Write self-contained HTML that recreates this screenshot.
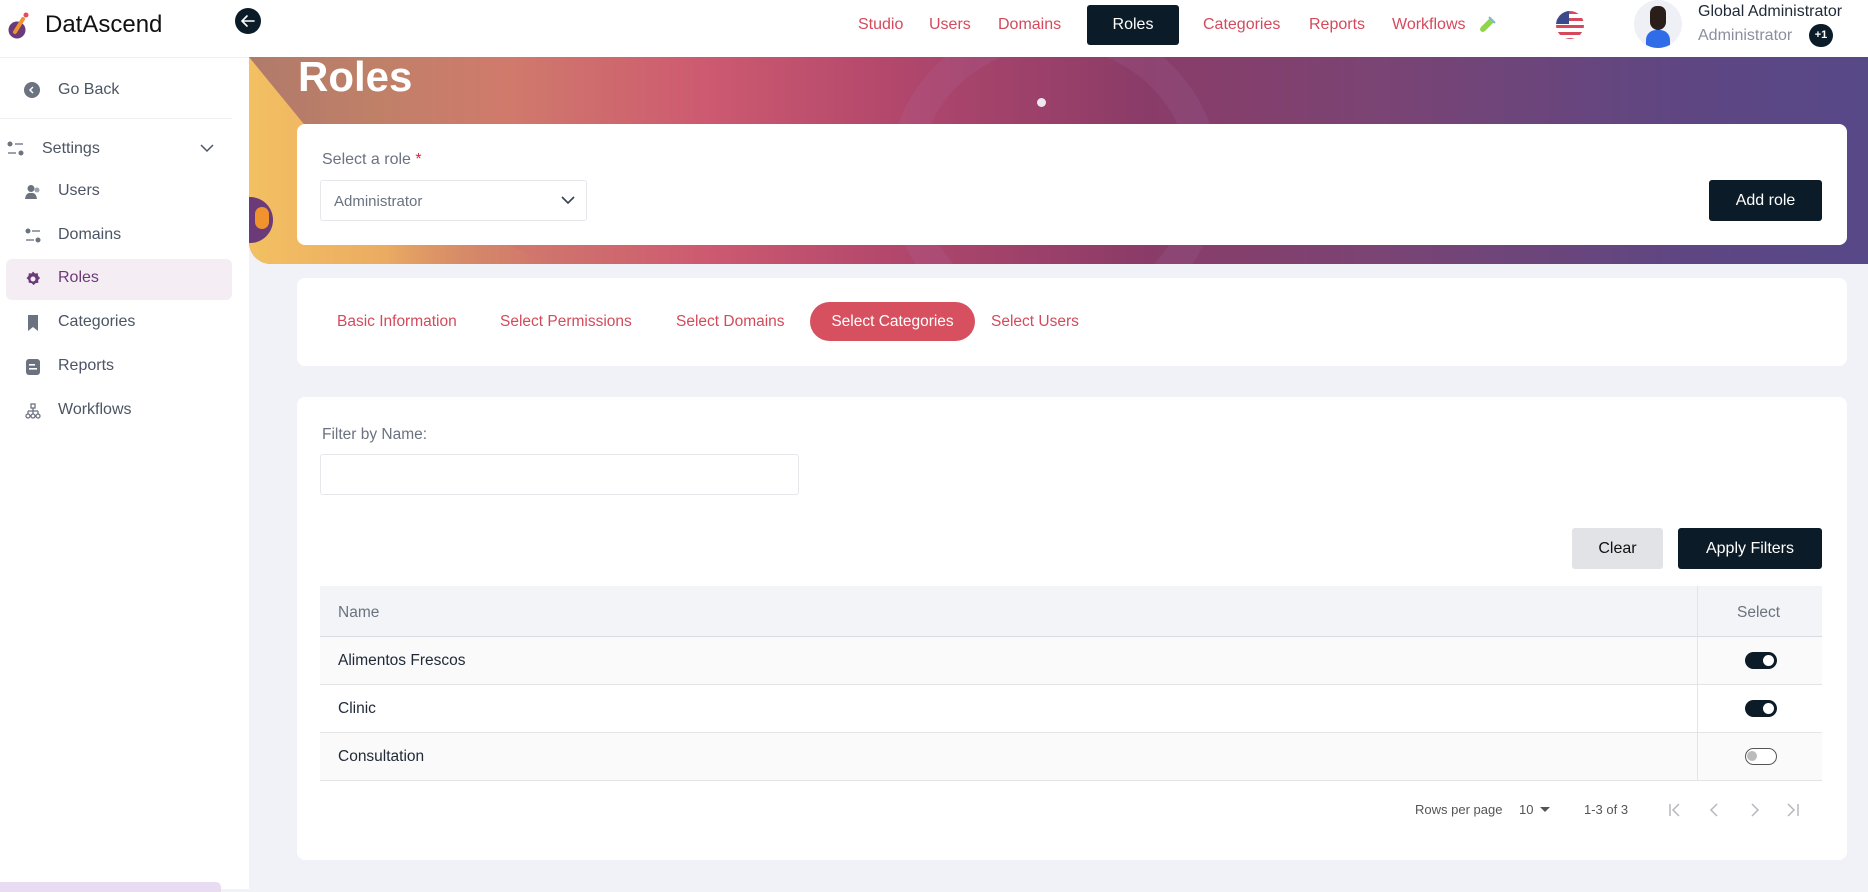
<!DOCTYPE html>
<html><head><meta charset="utf-8"><style>
*{box-sizing:border-box;margin:0;padding:0}
body{width:1868px;height:889px;overflow:hidden;background:#f1f2f7;font-family:"Liberation Sans",sans-serif;position:relative;color:#111827}
.abs{position:absolute}
.header{left:0;top:0;width:1868px;height:57px;background:#fff}
.nav a{position:absolute;top:16px;font-size:16px;color:#d44a5c;text-decoration:none}
.side{left:0;top:57px;width:249px;height:832px;background:#fff;border-top:1px solid #eee}
.si{position:absolute;left:58px;font-size:16px;color:#4b5563}
.ic{position:absolute;left:25px;width:16px;height:16px}
.card{background:#fff;border-radius:8px;position:absolute}
.tab{position:absolute;top:313px;font-size:15.5px;color:#d44a5c}
.tog{position:absolute;left:1745px;width:32px;height:17px;border-radius:9px;background:#0b1b27}
.tog::after{content:"";position:absolute;right:3px;top:3px;width:11px;height:11px;border-radius:50%;background:#fff}
.row{position:absolute;left:320px;width:1502px;height:48px;border-bottom:1px solid #e2e4e8;font-size:15.5px;color:#1f2937;padding:15px 0 0 18px}
</style></head><body>
<div class="abs header"></div>
<svg class="abs" style="left:6px;top:10px" width="26" height="30" viewBox="0 0 26 30"><circle cx="11" cy="20" r="8.5" fill="#6b3a78"/><path d="M9 22 L17 9" stroke="#f0922e" stroke-width="4" stroke-linecap="round"/><circle cx="20" cy="5" r="2.5" fill="#e84a5f"/></svg>
<div class="abs" style="left:45px;top:11px;font-size:24px;color:#111">DatAscend</div>
<div class="abs" style="left:235px;top:8px;width:26px;height:26px;border-radius:50%;background:#0b1b27"><svg width="26" height="26" fill="none" stroke="#fff" stroke-width="1.6" stroke-linecap="round"><path d="M19 13H7M12 8l-5 5 5 5"/></svg></div>
<div class="nav">
<a style="left:858px">Studio</a><a style="left:929px">Users</a><a style="left:998px">Domains</a>
<div class="abs" style="left:1087px;top:5px;width:92px;height:40px;background:#0b1b27;border-radius:3px;color:#fff;font-size:16px;text-align:center;line-height:40px">Roles</div>
<a style="left:1203px">Categories</a><a style="left:1309px">Reports</a><a style="left:1392px">Workflows</a>
</div>
<svg class="abs" style="left:1478px;top:16px" width="18" height="18" viewBox="0 0 18 18"><path d="M12 2 L16 6 L7 15 Q4 17 3 15 Q1 14 3 11 Z" fill="#8fd44a"/><path d="M11 1 L17 7" stroke="#7ab8e0" stroke-width="2"/></svg>
<svg class="abs" style="left:1555px;top:10px" width="30" height="30" viewBox="0 0 30 30"><defs><clipPath id="c"><circle cx="15" cy="15" r="14"/></clipPath></defs><g clip-path="url(#c)"><rect width="30" height="30" fill="#fff"/><rect y="1" width="30" height="3" fill="#d44a5c"/><rect y="8" width="30" height="3" fill="#d44a5c"/><rect y="15" width="30" height="3" fill="#d44a5c"/><rect y="22" width="30" height="3" fill="#d44a5c"/><rect y="28" width="30" height="3" fill="#d44a5c"/><rect width="14" height="14" fill="#3b4a8a"/></g></svg>
<div class="abs" style="left:1634px;top:0px;width:48px;height:48px;border-radius:50%;background:#eef0f6;overflow:hidden">
<div class="abs" style="left:12px;top:30px;width:24px;height:20px;border-radius:10px 10px 0 0;background:#2f6de8"></div>
<div class="abs" style="left:16px;top:6px;width:16px;height:24px;border-radius:7px 7px 8px 8px;background:#2a1e1a"></div>
</div>
<div class="abs" style="left:1698px;top:3px;font-size:16px;color:#1f2937">Global Administrator</div>
<div class="abs" style="left:1698px;top:27px;font-size:16px;color:#8a8fa0">Administrator</div>
<div class="abs" style="left:1809px;top:24px;width:24px;height:23px;border-radius:12px;background:#0b1b27;color:#fff;font-size:11px;font-weight:bold;text-align:center;line-height:23px">+1</div>

<div class="abs side">
<div class="abs" style="left:24px;top:24px;width:16px;height:16px;border-radius:50%;background:#6b7280"><svg width="16" height="16" fill="none" stroke="#fff" stroke-width="1.5"><path d="M9 5l-3 3 3 3"/></svg></div>
<div class="si" style="top:23px">Go Back</div>
<div class="abs" style="left:0;top:60px;width:232px;height:1px;background:#eee"></div>
<svg class="abs" style="left:7px;top:83px" width="18" height="16"><circle cx="3" cy="3" r="2.5" fill="#6b7280"/><rect x="8" y="2" width="8" height="2" fill="#9ca3af"/><rect x="1" y="11" width="8" height="2" fill="#9ca3af"/><circle cx="14" cy="12" r="2.5" fill="#6b7280"/></svg>
<div class="si" style="left:42px;top:82px">Settings</div>
<svg class="abs" style="left:199px;top:84px" width="16" height="12" fill="none" stroke="#4b5563" stroke-width="1.5"><path d="M2 3l6 6 6-6"/></svg>
<svg class="ic" style="top:126px" viewBox="0 0 16 16"><circle cx="6" cy="4.5" r="3.5" fill="#6b7280"/><path d="M0 15 Q1 8 6 9 Q11 8 12 15 Z" fill="#6b7280"/><circle cx="12" cy="6" r="2.5" fill="#9ca3af"/></svg>
<div class="si" style="top:124px">Users</div>
<svg class="ic" style="top:170px" viewBox="0 0 16 16"><circle cx="3" cy="3" r="2.5" fill="#6b7280"/><rect x="7" y="2" width="8" height="2" fill="#9ca3af"/><rect x="1" y="11" width="8" height="2" fill="#9ca3af"/><circle cx="13" cy="12" r="2.5" fill="#6b7280"/></svg>
<div class="si" style="top:168px">Domains</div>
<div class="abs" style="left:6px;top:201px;width:226px;height:41px;border-radius:6px;background:#f4eef4"></div>
<svg class="ic" style="top:213px" viewBox="0 0 16 16"><path d="M8 0.5l2 2 2.8-.3.3 2.8 2 2-2 2 .3 2.8-2.8.3-2 2-2-2-2.8-.3-.3-2.8-2-2 2-2 .3-2.8 2.8.3z" fill="#6b3a78"/><circle cx="8" cy="8" r="2.5" fill="#f4eef4"/></svg>
<div class="si" style="top:211px;color:#6b3a78">Roles</div>
<svg class="ic" style="top:257px" viewBox="0 0 16 16"><path d="M3 0h10v16l-5-4-5 4z" fill="#6b7280"/></svg>
<div class="si" style="top:255px">Categories</div>
<svg class="ic" style="top:301px" viewBox="0 0 16 16"><rect x="1" y="0" width="14" height="16" rx="3" fill="#6b7280"/><rect x="4" y="5" width="6" height="1.6" fill="#fff"/><rect x="4" y="9" width="8" height="1.6" fill="#fff"/></svg>
<div class="si" style="top:299px">Reports</div>
<svg class="ic" style="top:345px" viewBox="0 0 16 16" fill="none" stroke="#6b7280" stroke-width="1.3"><rect x="6" y="1" width="4" height="4"/><path d="M8 5v3M3 8h10M3 8v3M8 8v3M13 8v3"/><circle cx="3" cy="13" r="2"/><circle cx="8" cy="13" r="2"/><circle cx="13" cy="13" r="2"/></svg>
<div class="si" style="top:343px">Workflows</div>
<div class="abs" style="left:0;top:824px;width:221px;height:10px;background:#e8dcf2;border-radius:0 5px 0 0"></div>
</div>

<div class="abs" style="left:249px;top:57px;width:1619px;height:207px;border-radius:0 0 0 22px;overflow:hidden;background:linear-gradient(90deg,#b07a6a 0%,#c08068 8%,#d07a6c 16%,#cd5a70 28%,#b2476c 40%,#8b3c68 55%,#7a4474 70%,#5f4682 88%,#574888 100%)">
<svg class="abs" style="left:0;top:0" width="300" height="207"><defs><linearGradient id="y" x1="0" x2="1" y1="0" y2="0"><stop offset="0" stop-color="#f3c062"/><stop offset=".45" stop-color="#ebac62"/><stop offset="1" stop-color="#d88468" stop-opacity="0"/></linearGradient></defs><path d="M0 0L90 110L300 207H0Z" fill="url(#y)"/></svg>
<div class="abs" style="left:640px;top:-40px;width:330px;height:320px;border-radius:50%;border:30px solid rgba(170,130,190,.12)"></div>
<div class="abs" style="left:-22px;top:140px;width:46px;height:46px;border-radius:50%;background:#6b3a78"></div>
<div class="abs" style="left:6px;top:150px;width:14px;height:22px;border-radius:7px;background:#f0922e"></div>
<div class="abs" style="left:49px;top:-4px;font-size:42px;font-weight:bold;color:#fff">Roles</div>
<div class="abs" style="left:788px;top:41px;width:9px;height:9px;border-radius:50%;background:#f0e6f0"></div>
</div>

<div class="card" style="left:297px;top:124px;width:1550px;height:121px">
<div class="abs" style="left:25px;top:27px;font-size:16px;color:#6b7280">Select a role <span style="color:#d42a3a">*</span></div>
<div class="abs" style="left:23px;top:56px;width:267px;height:41px;border:1px solid #e5e7eb;border-radius:3px;font-size:15px;color:#6b7280;padding:12px 0 0 13px">Administrator<svg class="abs" style="right:10px;top:13px" width="16" height="12" fill="none" stroke="#374151" stroke-width="1.6"><path d="M2 3l6 6 6-6"/></svg></div>
<div class="abs" style="left:1412px;top:56px;width:113px;height:41px;background:#0b1b27;border-radius:3px;color:#fff;font-size:16px;text-align:center;line-height:41px">Add role</div>
</div>

<div class="card" style="left:297px;top:278px;width:1550px;height:88px"></div>
<div class="tab" style="left:337px">Basic Information</div>
<div class="tab" style="left:500px">Select Permissions</div>
<div class="tab" style="left:676px">Select Domains</div>
<div class="abs" style="left:810px;top:302px;width:165px;height:39px;border-radius:20px;background:#d6505f;color:#fff;font-size:15.5px;text-align:center;line-height:39px">Select Categories</div>
<div class="tab" style="left:991px">Select Users</div>

<div class="card" style="left:297px;top:397px;width:1550px;height:463px"></div>
<div class="abs" style="left:322px;top:426px;font-size:15.5px;color:#6b7280">Filter by Name:</div>
<div class="abs" style="left:320px;top:454px;width:479px;height:41px;border:1px solid #e5e7eb;border-radius:3px;background:#fff"></div>
<div class="abs" style="left:1572px;top:528px;width:91px;height:41px;background:#e1e3e7;border-radius:3px;font-size:16px;text-align:center;line-height:41px;color:#111">Clear</div>
<div class="abs" style="left:1678px;top:528px;width:144px;height:41px;background:#0b1b27;border-radius:3px;font-size:16px;text-align:center;line-height:41px;color:#fff">Apply Filters</div>

<div class="abs" style="left:320px;top:586px;width:1502px;height:51px;background:#f3f4f8;border-bottom:1px solid #d8dbe0"></div>
<div class="abs" style="left:338px;top:604px;font-size:15.5px;color:#6b7280">Name</div>
<div class="abs" style="left:1737px;top:604px;font-size:15.5px;color:#6b7280">Select</div>
<div class="row" style="top:637px;background:#fafafa">Alimentos Frescos</div>
<div class="row" style="top:685px;background:#fff">Clinic</div>
<div class="row" style="top:733px;background:#fafafa">Consultation</div>
<div class="abs" style="left:1697px;top:586px;width:1px;height:195px;background:#e2e4e8"></div>
<div class="tog" style="top:652px"></div>
<div class="tog" style="top:700px"></div>
<div class="abs" style="left:1745px;top:748px;width:32px;height:17px;border-radius:9px;border:1.5px solid #555;background:#fff"><div class="abs" style="left:1px;top:2px;width:10px;height:10px;border-radius:50%;background:#bbb"></div></div>

<div class="abs" style="left:1415px;top:802px;font-size:13px;color:#555">Rows per page</div>
<div class="abs" style="left:1519px;top:802px;font-size:13px;color:#555">10</div>
<div class="abs" style="left:1540px;top:807px;width:0;height:0;border-left:5px solid transparent;border-right:5px solid transparent;border-top:5px solid #555"></div>
<div class="abs" style="left:1584px;top:802px;font-size:13px;color:#555">1-3 of 3</div>
<svg class="abs" style="left:1665px;top:800px" width="150" height="20" fill="none" stroke="#b5b8bf" stroke-width="1.5"><path d="M5 4v12M14 4l-6 6 6 6"/><path d="M52 4l-6 6 6 6"/><path d="M87 4l6 6-6 6"/><path d="M123 4l6 6-6 6M133 4v12"/></svg>
</body></html>
